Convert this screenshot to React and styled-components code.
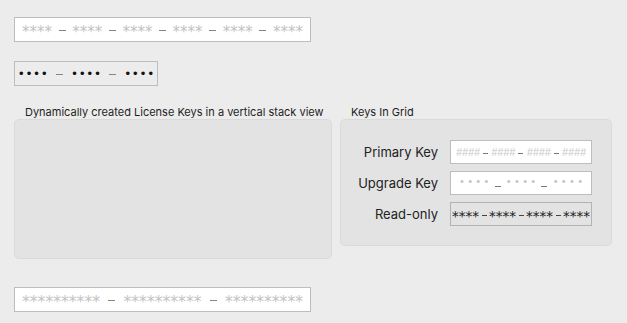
import React from "react";
import styled, { createGlobalStyle } from "styled-components";

const Global = createGlobalStyle`
  html, body { margin: 0; padding: 0; background: #ececec; }
  body { font-family: Inter, "Noto Sans", "Liberation Sans", sans-serif; }
`;

const Page = styled.div`
  width: 627px;
  height: 323px;
  box-sizing: border-box;
  padding: 17px 14px 0 14px;
  display: flex;
  flex-direction: column;
  align-items: flex-start;
`;

const Field = styled.div`
  box-sizing: border-box;
  width: ${(p) => p.$w}px;
  height: ${(p) => p.$h || 25}px;
  background: ${(p) => (p.$readOnly || p.$flat ? "transparent" : "#ffffff")};
  border: 1px solid ${(p) => (p.$readOnly ? "#b3b3b3" : "#bdbdbd")};
  padding: 0 ${(p) => p.$pad || 7}px;
  display: flex;
  align-items: center;
  justify-content: space-between;
  margin-top: ${(p) => p.$mt || 0}px;
  font-family: "DejaVu Sans", "Liberation Sans", sans-serif;
`;

const Seg = styled.span`
  font-size: ${(p) => p.$size || 13}px;
  color: ${(p) => p.$color};
  letter-spacing: ${(p) => p.$ls || 0}px;
  margin-right: ${(p) => -(p.$ls || 0)}px;
  font-style: ${(p) => (p.$italic ? "italic" : "normal")};
  font-family: ${(p) => p.$font || "inherit"};
  line-height: 1;
  white-space: nowrap;
  transform: translateY(${(p) => p.$dy || 0}px);
`;

const Dash = styled.span`
  display: inline-block;
  width: ${(p) => p.$w || 7}px;
  height: 1px;
  background: ${(p) => p.$color || "#7a7a7a"};
  transform: translateY(${(p) => p.$dy || 1}px);
`;

const GroupsRow = styled.div`
  display: flex;
  gap: 8px;
  margin-top: 19px;
  align-items: flex-start;
`;

const Group = styled.div`
  display: flex;
  flex-direction: column;
`;

const GroupTitle = styled.div`
  font-size: 11px;
  line-height: 14px;
  color: #1e1e1e;
  padding-left: 11px;
`;

const GroupBox = styled.div`
  box-sizing: border-box;
  width: ${(p) => p.$w}px;
  height: ${(p) => p.$h}px;
  background: #e3e3e3;
  border: 1px solid #dadada;
  border-radius: 5px;
`;

const GridBox = styled(GroupBox)`
  display: grid;
  grid-template-columns: 1fr 142px;
  column-gap: 12px;
  row-gap: 7px;
  align-content: start;
  padding: 20px 19px 0 0;
`;

const RowLabel = styled.div`
  font-size: 13px;
  color: #222;
  text-align: right;
  align-self: center;
`;

function KeyText({ groups, text, color, dashColor, size, ls, italic, dashW, dy, dashDy, font }) {
  const out = [];
  for (let i = 0; i < groups; i++) {
    if (i > 0) out.push(<Dash key={"d" + i} $color={dashColor} $w={dashW} $dy={dashDy} />);
    out.push(
      <Seg key={"s" + i} $color={color} $size={size} $ls={ls} $italic={italic} $dy={dy} $font={font}>
        {text}
      </Seg>
    );
  }
  return <>{out}</>;
}

const SANS = '"Liberation Sans", sans-serif';

export default function App() {
  return (
    <>
      <Global />
      <Page>
        <Field $w={297} $pad={7}>
          <KeyText groups={6} text="****" color="#c2c2c2" dashColor="#858585" size={15} dy={3} dashDy={1} />
        </Field>
        <Field $w={144} $mt={19} $pad={4} $flat>
          <KeyText groups={3} text="••••" color="#111" dashColor="#858585" size={13} ls={3.1} font={SANS} dy={0} dashDy={1} />
        </Field>
        <GroupsRow>
          <Group>
            <GroupTitle>Dynamically created License Keys in a vertical stack view</GroupTitle>
            <GroupBox $w={318} $h={140} />
          </Group>
          <Group>
            <GroupTitle>Keys In Grid</GroupTitle>
            <GridBox $w={272} $h={127}>
              <RowLabel>Primary Key</RowLabel>
              <Field $w={142} $h={24} $pad={5}>
                <KeyText groups={4} text="####" color="#c8c8c8" dashColor="#777" size={10.8} italic font={SANS} dashW={5} dashDy={1} />
              </Field>
              <RowLabel>Upgrade Key</RowLabel>
              <Field $w={142} $h={24} $pad={9}>
                <KeyText groups={3} text="••••" color="#c4c4c4" dashColor="#777" size={11} ls={4.3} font={SANS} dy={-2} dashW={6} dashDy={3} />
              </Field>
              <RowLabel>Read-only</RowLabel>
              <Field $w={142} $h={24} $pad={1} $readOnly>
                <KeyText groups={4} text="****" color="#222" dashColor="#444" size={13.5} dy={3} dashW={5} dashDy={0} />
              </Field>
            </GridBox>
          </Group>
        </GroupsRow>
        <Field $w={297} $mt={28} $pad={7}>
          <KeyText groups={3} text="**********" color="#c2c2c2" dashColor="#858585" size={15.6} dy={3} dashDy={1} />
        </Field>
      </Page>
    </>
  );
}
